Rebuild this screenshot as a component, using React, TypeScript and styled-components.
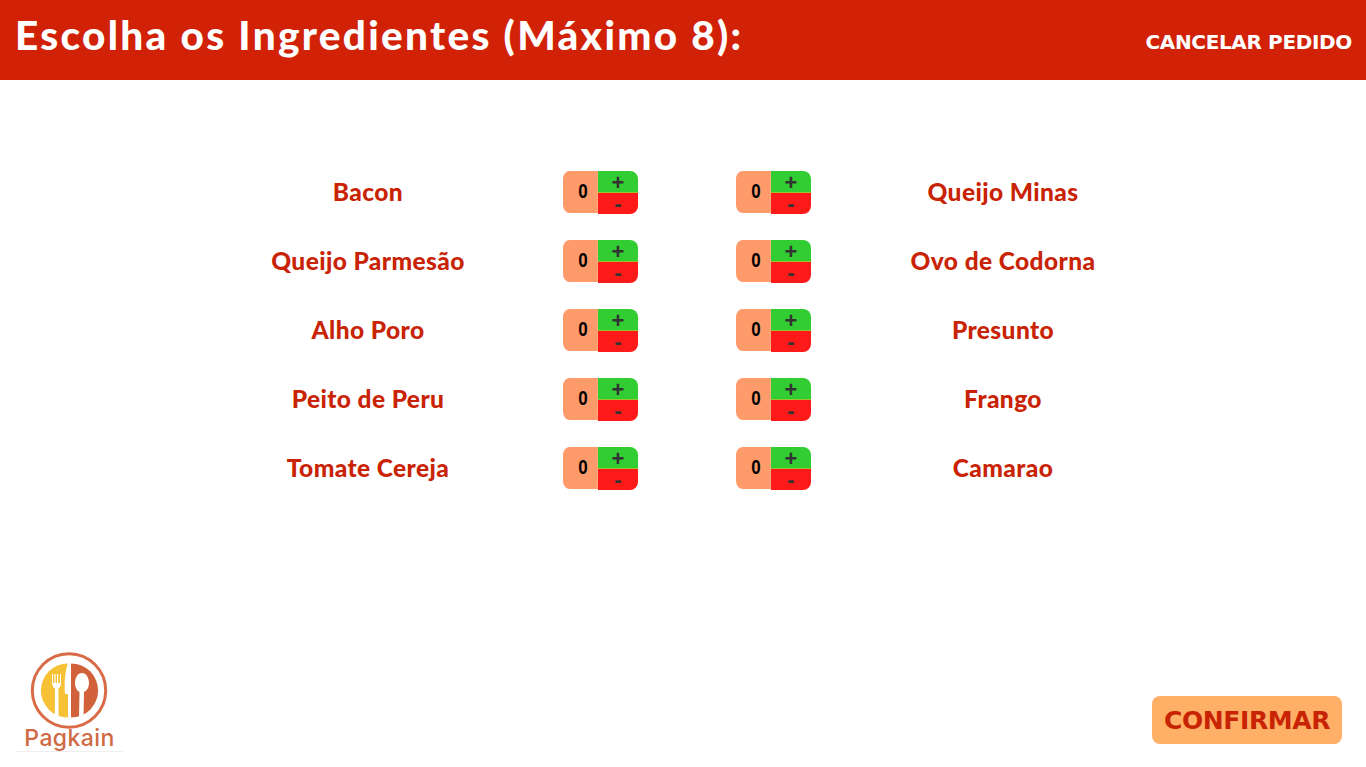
import React from "react";
import styled, { createGlobalStyle } from "styled-components";

const Global = createGlobalStyle`
  html, body { margin: 0; padding: 0; background: #fff; }
  body { font-family: "Lato", "Liberation Sans", sans-serif; }
`;

const Page = styled.div`
  display: flex;
  flex-direction: column;
  height: 767px;
  overflow: hidden;
`;

const Header = styled.header`
  display: flex;
  justify-content: space-between;
  height: 80px;
  background: #d12208;
  color: #fff;
  padding: 0 14px 0 15px;
`;

const Title = styled.h1`
  margin: 12px 0 0;
  font: 900 40.5px/46px "Lato", sans-serif;
  letter-spacing: 2.3px;
`;

const Cancel = styled.button`
  align-self: flex-start;
  margin-top: 30px;
  padding: 0;
  border: 0;
  background: none;
  color: #fff;
  font: 700 20px/24px "DejaVu Sans", sans-serif;
  letter-spacing: -0.35px;
`;

const List = styled.main`
  flex: 1;
  display: flex;
  flex-direction: column;
  gap: 27px;
  padding: 91px 0 0 173px;
`;

const Row = styled.div`
  display: grid;
  grid-template-columns: 390px 75px 98px 75px 384px;
  align-items: center;
  height: 42px;
`;

const Name = styled.div<{ $col: number }>`
  grid-column: ${(p) => p.$col};
  margin-top: -2px;
  text-align: center;
  color: #c92305;
  font: 900 24.5px/30px "Lato", sans-serif;
  letter-spacing: 0.4px;
`;

const Stepper = styled.div<{ $col: number }>`
  grid-column: ${(p) => p.$col};
  display: grid;
  grid-template-columns: 35px 40px;
  grid-template-rows: 21px 22px;
  height: 43px;
`;

const Count = styled.div`
  grid-row: 1 / 3;
  height: 42px;
  width: 41px;
  display: flex;
  align-items: center;
  justify-content: center;
  padding: 0 0 2px 6px;
  box-sizing: border-box;
  background: #ff9a6b;
  border-radius: 8px 0 0 8px;
  color: #000;
  font: 700 20px/1 "Liberation Sans", sans-serif;
  transform: scaleX(0.85);
  transform-origin: left;
`;

const StepButton = styled.button<{ $plus?: boolean }>`
  display: flex;
  align-items: center;
  justify-content: center;
  padding: ${(p) => (p.$plus ? "2px 0 0" : "0")};
  border: 0;
  border-top: ${(p) => (p.$plus ? "0" : "1px solid #9fc12c")};
  background: ${(p) => (p.$plus ? "#32cd32" : "#ff1a1a")};
  border-radius: ${(p) => (p.$plus ? "0 8px 0 0" : "0 0 8px 0")};
  color: #333;
  font: 700 22px/16px "Liberation Sans", sans-serif;
`;

const Footer = styled.footer`
  display: flex;
  justify-content: space-between;
  align-items: flex-end;
  height: 123px;
  padding: 0 24px 23px 16px;
`;

const Logo = styled.div`
  display: flex;
  flex-direction: column;
  align-items: center;
  width: 107px;
  margin-bottom: -8px;
  border-bottom: 1px solid #eeeeee;
`;

const LogoName = styled.span`
  margin-top: -5px;
  color: #cf6a45;
  font: 500 23px/26px "Inter", sans-serif;
  letter-spacing: 0.4px;
`;

const Confirm = styled.button`
  width: 190px;
  height: 48px;
  padding: 1px 0 0;
  border: 0;
  border-radius: 8px;
  background: #ffb066;
  color: #c92305;
  font: 700 25px/1 "DejaVu Sans", sans-serif;
  letter-spacing: -0.4px;
`;

const rows: [string, string][] = [
  ["Bacon", "Queijo Minas"],
  ["Queijo Parmesão", "Ovo de Codorna"],
  ["Alho Poro", "Presunto"],
  ["Peito de Peru", "Frango"],
  ["Tomate Cereja", "Camarao"],
];

const StepperControl = ({ col }: { col: number }) => (
  <Stepper $col={col}>
    <Count>0</Count>
    <StepButton $plus>+</StepButton>
    <StepButton>-</StepButton>
  </Stepper>
);

const LogoMark = () => (
  <svg width="107" height="78" viewBox="16 652 107 78" aria-hidden="true">
    <circle cx="69" cy="690.5" r="36.7" fill="none" stroke="#d96b47" strokeWidth="3" />
    <path d="M68 663.4 A27 27 0 0 0 68 717.6 Z" fill="#f7c136" />
    <path d="M71 663.4 A27 27 0 0 1 71 717.6 Z" fill="#d0613a" />
    {/* fork */}
    <path d="M52 674 V682 Q52 687 55 688.5 L54.8 718 H58.6 L58.4 688.5 Q61 687 61 682 V674 H60 V683 H58.2 V674 H57 V683 H55.6 V674 H54.4 V683 H53 V674 Z" fill="#fff" />
    {/* spoon */}
    <path d="M82 673 C77.5 673 75 678 75 683 C75 688 77.5 691 79.5 692 L79 718 H83.5 L84 692 C86.5 691 89 688 89 683 C89 678 86.5 673 82 673 Z" fill="#fff" />
    {/* knife blade */}
    <path d="M68.5 662 C65 670 64 684 65 694 H68.5 Z" fill="#fff" />
  </svg>
);

export default function App() {
  return (
    <Page>
      <Global />
      <Header>
        <Title>Escolha os Ingredientes (Máximo 8):</Title>
        <Cancel>CANCELAR PEDIDO</Cancel>
      </Header>
      <List>
        {rows.map(([left, right]) => (
          <Row key={left}>
            <Name $col={1}>{left}</Name>
            <StepperControl col={2} />
            <StepperControl col={4} />
            <Name $col={5}>{right}</Name>
          </Row>
        ))}
      </List>
      <Footer>
        <Logo>
          <LogoMark />
          <LogoName>Pagkain</LogoName>
        </Logo>
        <Confirm>CONFIRMAR</Confirm>
      </Footer>
    </Page>
  );
}
